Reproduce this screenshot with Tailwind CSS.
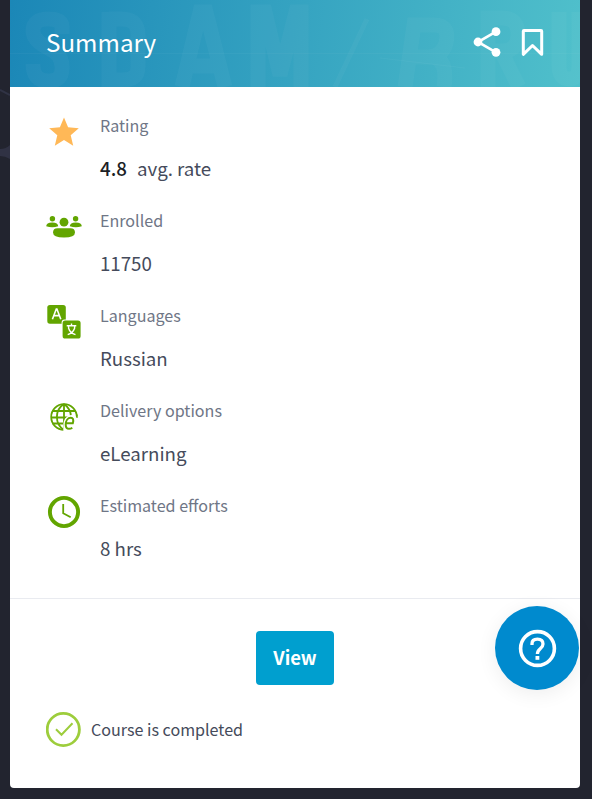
<!DOCTYPE html>
<html lang="en">
<head>
<meta charset="utf-8">
<title>Summary</title>
<script src="https://cdn.jsdelivr.net/npm/@tailwindcss/browser@4"></script>
</head>
<body class="relative h-[799px] overflow-hidden bg-[#22242f] px-[10px] font-['Noto_Sans_CJK_SC','Noto_Sans',sans-serif] text-[#454b5b]">
<svg class="absolute left-0 top-[80px] h-[80px] w-[10px]" viewBox="0 0 10 80" fill="none"><path d="M0 10L10 15" stroke="#303345" stroke-width="2"/><path d="M0 69Q6 69 10 65V79Q5 76 0 76Z" fill="#303244"/></svg>
<main class="relative flex h-[788px] w-[570px] flex-col overflow-hidden rounded-b-[4px] bg-white">
  <header class="relative h-[87px] shrink-0 overflow-hidden bg-[linear-gradient(98deg,#1b87b7_0%,#50c0cb_100%)]">
    <svg class="absolute inset-0" width="570" height="87" viewBox="0 0 570 87" fill="none" stroke="#fff" stroke-opacity=".03" stroke-width="15">
      <path d="M52 34V26Q51 19 38 19Q23 19 23 31Q23 40 38 48Q53 54 52 69Q52 81 38 81Q23 81 23 64"/>
      <path d="M99 12V87M99 19H112Q128 19 128 35V67Q128 80 113 80H99"/>
      <path d="M172 87L190 12H196L215 87M182 66H208"/>
      <path d="M248 87V12H255L270 75L286 12H291V87"/>
      <path d="M357 19L325 87" stroke-width="5"/>
      <path d="M395 87L404 25H424Q440 25 436 43Q433 55 420 57H400M423 57Q438 60 434 87"/>
      <path d="M478 87V18H492Q508 18 508 34Q508 51 492 51H478M491 51L509 87M549 12V66Q549 79 559 79Q569 79 569 65V12"/>
      <path d="M0 53.5H570" stroke-width="1"/>
      <path d="M370 58L455 68" stroke-width="1"/>
    </svg>
    <div class="relative flex h-[83px] items-center justify-between pl-[36px] pr-[35px]">
      <h1 class="text-[24.2px] leading-[36px] text-white">Summary</h1>
      <div class="flex items-center gap-[15px]">
        <svg width="32" height="32" viewBox="0 0 32 32" fill="#fff" stroke="#fff"><path d="M24 5.7L6 16L24 26.3" fill="none" stroke-width="2.6"/><circle cx="24" cy="5.7" r="4.4" stroke="none"/><circle cx="6" cy="16" r="4.4" stroke="none"/><circle cx="24" cy="26.3" r="4.4" stroke="none"/></svg>
        <svg width="26" height="32" viewBox="0 0 26 32" fill="none" stroke="#fff" stroke-width="3" stroke-linejoin="round"><path d="M5 4.4H22Q22.7 4.4 22.7 5.2V28.3L13.5 19.5L4.3 28.3V5.2Q4.3 4.4 5 4.4Z"/></svg>
      </div>
    </div>
  </header>
  <section class="flex h-[512px] shrink-0 flex-col border-b border-[#e9ebf0] pl-[36px] pt-[26px]">
    <div class="flex h-[95px]">
      <svg class="mt-[2px] shrink-0" width="36" height="36" viewBox="0 0 36 36" fill="#ffb857"><path d="M18 2.4L22.1 12.3L32.8 13.2L24.7 20.2L27.2 30.7L18 25.1L8.8 30.7L11.3 20.2L3.2 13.2L13.9 12.3Z"/></svg>
      <div class="ml-[18px]"><div class="text-[16.1px] leading-[24px] text-[#6f7686]">Rating</div><div class="mt-[16px] flex gap-[10px] text-[18.7px] leading-[30px]"><span class="font-medium text-[#1c1f26]">4.8</span><span>avg. rate</span></div></div>
    </div>
    <div class="flex h-[95px]">
      <svg class="mt-[1px] shrink-0" width="36" height="36" viewBox="0 0 36 36" fill="#62a500"><circle cx="6.4" cy="9.8" r="2.7"/><circle cx="29.6" cy="9.8" r="2.7"/><circle cx="18" cy="13.2" r="4.4"/><path d="M.2 17.2Q.2 13.4 6.2 13.4Q12.2 13.4 12.2 17.2Q6.2 19.4 .2 17.2ZM23.8 17.2Q23.8 13.4 29.8 13.4Q35.8 13.4 35.8 17.2Q29.8 19.4 23.8 17.2ZM7 23.5Q7 19.2 11.5 19.2H24.5Q29 19.2 29 23.5Q29 28.5 18 28.5Q7 28.5 7 23.5Z"/></svg>
      <div class="ml-[18px]"><div class="text-[16.1px] leading-[24px] text-[#6f7686]">Enrolled</div><div class="mt-[16px] text-[18.7px] leading-[30px]">11750</div></div>
    </div>
    <div class="flex h-[95px]">
      <svg class="mt-[1px] shrink-0" width="36" height="36" viewBox="0 0 36 36"><rect x="1.3" y="1" width="18.5" height="18.7" rx="2.6" fill="#62a500"/><rect x="15.6" y="15.6" width="20" height="20" rx="3" fill="#fff"/><rect x="16.6" y="16.5" width="18" height="18" rx="2.6" fill="#62a500"/><path d="M6.4 15.2L10.3 5H10.9L14.8 15.2M7.9 11.6H13.3" fill="none" stroke="#fff" stroke-width="1.6"/><path d="M20.7 21.8H30.3M25.5 19.5V22M22.6 22V24.3Q24 29 29.5 30.7M28.6 22V24.3Q27 29 21.7 30.7" fill="none" stroke="#fff" stroke-width="1.4"/></svg>
      <div class="ml-[18px]"><div class="text-[16.1px] leading-[24px] text-[#6f7686]">Languages</div><div class="mt-[16px] text-[18.7px] leading-[30px]">Russian</div></div>
    </div>
    <div class="flex h-[95px]">
      <svg class="mt-[1px] shrink-0" width="36" height="36" viewBox="0 0 36 36" fill="none" stroke="#62a500" stroke-width="1.8"><circle cx="18" cy="18" r="12.8"/><path d="M18 5V31M18 5C8.5 11 8.5 25 18 31M18 5C23 8.5 25 13 25 18M6.5 12H29.5M5 18.5H24M6.5 24.5H20"/><path d="M17.3 32.5V27C17.3 20 21 16 25.5 16Q30.5 16 30.5 19L32 19V33Z" fill="#fff" stroke="none"/><path d="M30.8 17.5V15.5" /><path d="M20 24.3H26.8C27.9 20.7 27 18.8 24.8 18.8C21.8 18.8 19.7 21.8 19.7 25.7C19.7 28.4 21 29.8 23 29.8Q24.8 29.8 26.3 28.7" stroke-width="2"/></svg>
      <div class="ml-[18px]"><div class="text-[16.1px] leading-[24px] text-[#6f7686]">Delivery options</div><div class="mt-[16px] text-[18.7px] leading-[30px]">eLearning</div></div>
    </div>
    <div class="flex h-[95px]">
      <svg class="mt-[1px] shrink-0" width="36" height="36" viewBox="0 0 36 36" fill="none" stroke="#62a500"><circle cx="18" cy="18" r="14.1" stroke-width="3.9"/><path d="M17.2 10V19.3L24.7 23.3" stroke-width="1.8"/></svg>
      <div class="ml-[18px]"><div class="text-[16.1px] leading-[24px] text-[#6f7686]">Estimated efforts</div><div class="mt-[16px] text-[18.7px] leading-[30px]">8 hrs</div></div>
    </div>
  </section>
  <footer class="px-[36px] pt-[32px]">
    <button class="ml-[210px] flex h-[54px] w-[78px] items-center justify-center rounded-[4px] bg-[#009fcf] pb-[2px] text-[18.4px] font-bold leading-[30px] text-white">View</button>
    <div class="mt-[27px] flex items-center gap-[10px]">
      <svg width="35" height="35" viewBox="0 0 35 35" fill="none" stroke="#9dcd3c"><circle cx="17.3" cy="17.5" r="16.1" stroke-width="2.8"/><path d="M10 17.3L15.5 22.8L26.5 11.2" stroke-width="2"/></svg>
      <span class="pb-[2px] text-[16.1px] leading-[24px]">Course is completed</span>
    </div>
  </footer>
</main>
<div class="absolute left-[495px] top-[606px] flex size-[84px] items-center justify-center rounded-full bg-[#008ace] shadow-[0_4px_20px_rgba(0,0,0,0.07)]">
  <svg width="40" height="40" viewBox="0 0 40 40" fill="none" stroke="#fff"><circle cx="20.5" cy="20.5" r="16.9" stroke-width="3.6"/><path d="M15 17V15.8Q15 11.1 20.4 11.1Q26 11.1 26 16Q26 18.4 23.2 20.8Q20.4 23.1 20.4 26" stroke-width="3.3"/><path d="M20.4 28V31.8" stroke-width="3.8"/></svg>
</div>
</body>
</html>
